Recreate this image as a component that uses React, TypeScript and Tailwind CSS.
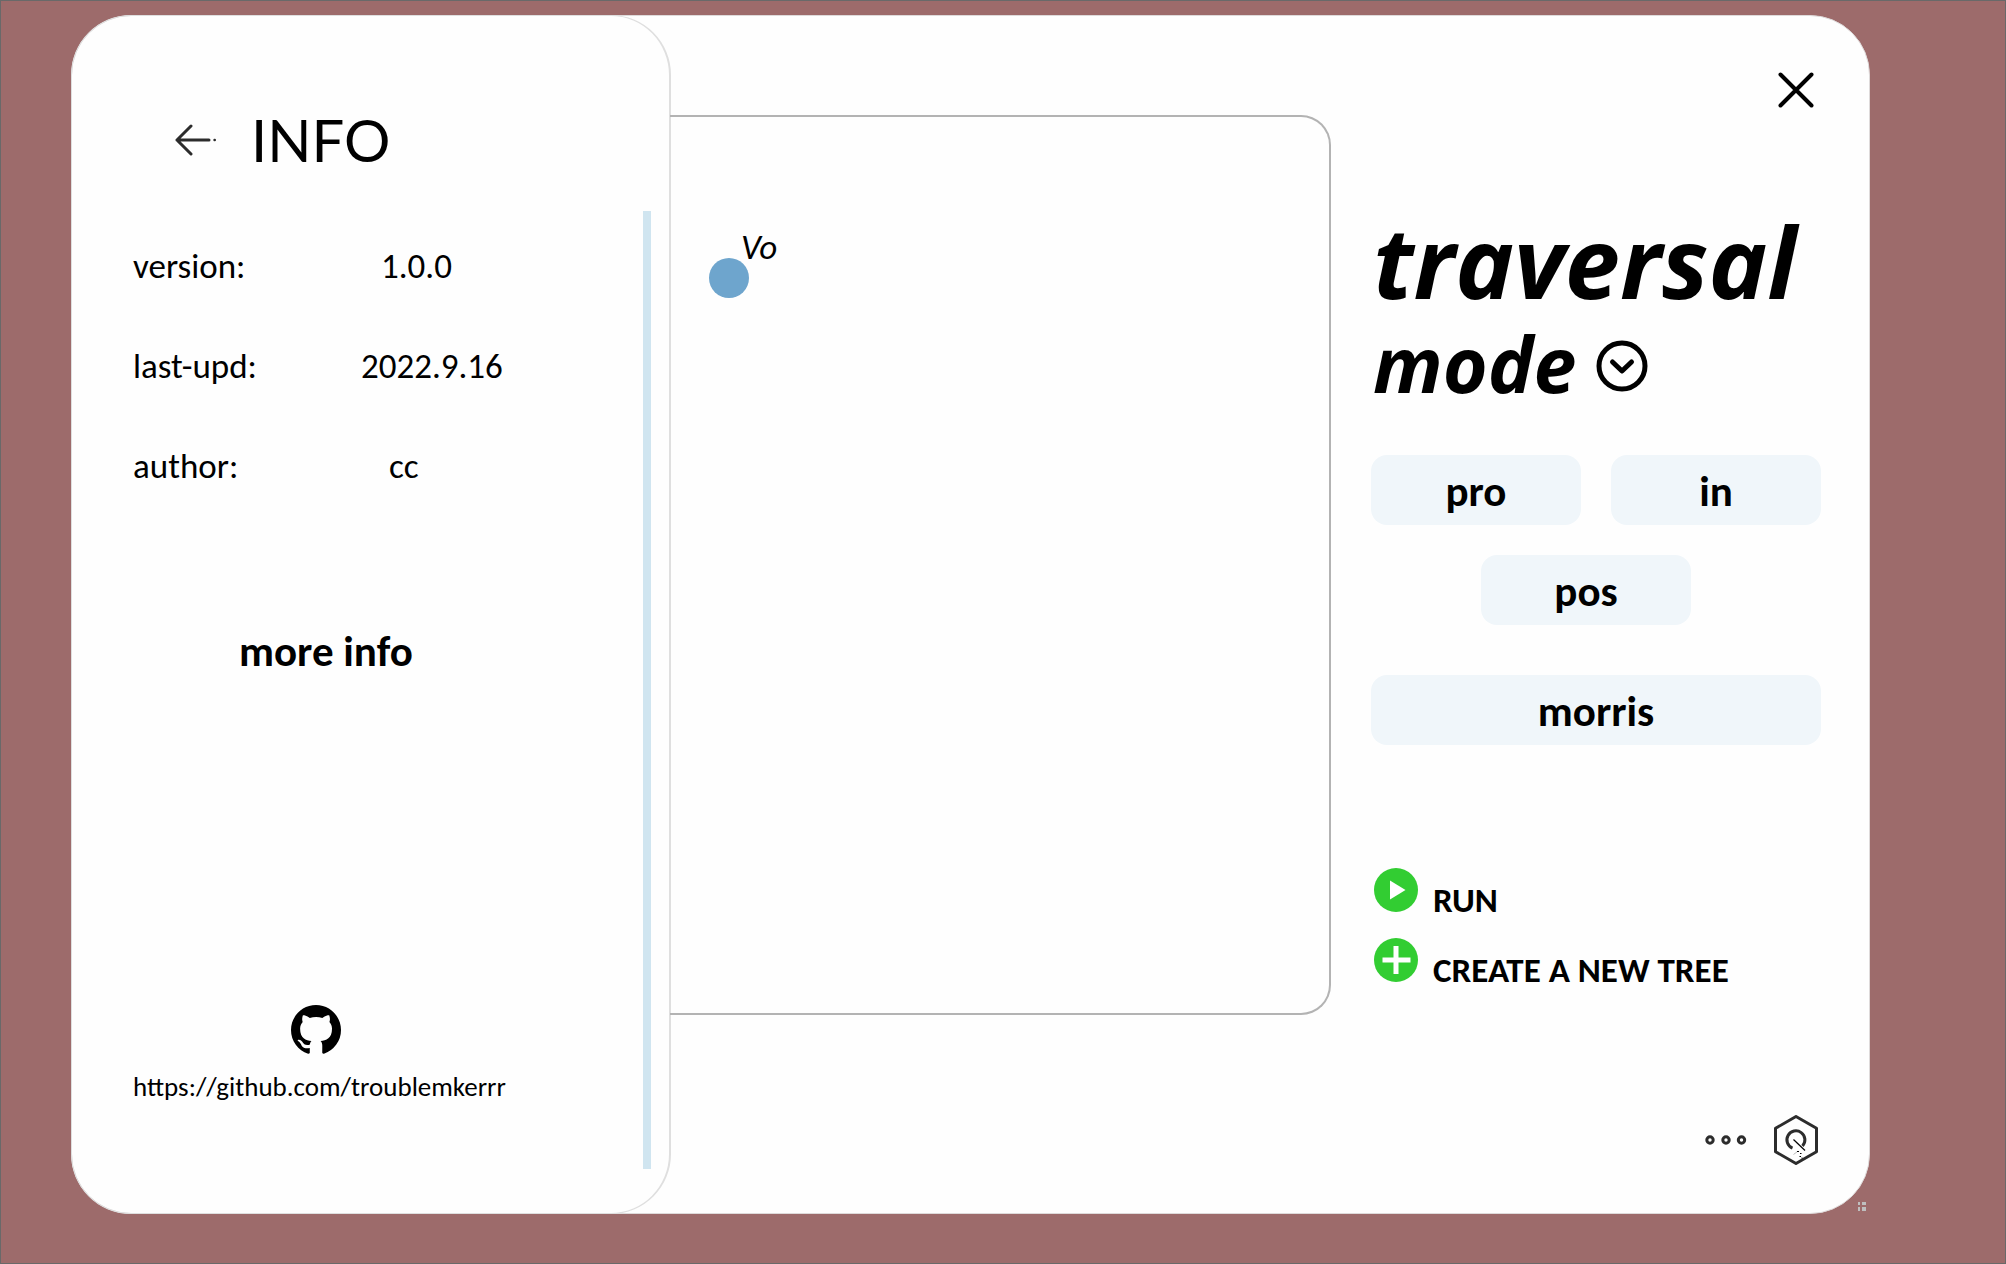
import React from "react";

const details = [
  { label: "version:", value: "1.0.0", indent: "pl-5" },
  { label: "last-upd:", value: "2022.9.16", indent: "pl-0" },
  { label: "author:", value: "cc", indent: "pl-7" },
];

function ArrowLeftIcon() {
  return (
    <svg width="42" height="32" viewBox="0 0 42 32" fill="none" stroke="#2c2c2c" strokeWidth="3" strokeLinecap="round" strokeLinejoin="round">
      <path d="M16 2 2 16l14 14M2 16h32" />
      <path d="M39.500 16h.3" strokeWidth="2.400" />
    </svg>
  );
}

function GithubIcon() {
  return (
    <svg width="50" height="50" viewBox="0 0 16 16" fill="#000">
      <path d="M8 0C3.58 0 0 3.58 0 8c0 3.54 2.29 6.53 5.47 7.59.4.07.55-.17.55-.38 0-.19-.01-.82-.01-1.49-2.01.37-2.53-.49-2.69-.94-.09-.23-.48-.94-.82-1.13-.28-.15-.68-.52-.01-.53.63-.01 1.08.58 1.23.82.72 1.21 1.87.87 2.33.66.07-.52.28-.87.51-1.07-1.78-.2-3.64-.89-3.64-3.95 0-.87.31-1.59.82-2.15-.08-.2-.36-1.02.08-2.12 0 0 .67-.21 2.2.82.64-.18 1.32-.27 2-.27s1.36.09 2 .27c1.53-1.04 2.2-.82 2.2-.82.44 1.1.16 1.92.08 2.12.51.56.82 1.27.82 2.15 0 3.07-1.87 3.75-3.65 3.95.29.25.54.73.54 1.48 0 1.07-.01 1.93-.01 2.2 0 .21.15.46.55.38A8.01 8.01 0 0 0 16 8c0-4.42-3.58-8-8-8z" />
    </svg>
  );
}

function CloseIcon() {
  return (
    <svg width="36" height="36" viewBox="0 0 36 36" fill="none" stroke="#000" strokeWidth="4" strokeLinecap="round">
      <path d="m2.500 2.500 31 31M33.500 2.500l-31 31" />
    </svg>
  );
}

function ChevronCircleIcon() {
  return (
    <svg width="52" height="52" viewBox="0 0 52 52" fill="none" stroke="#000" strokeLinecap="round" strokeLinejoin="round">
      <circle cx="26" cy="26" r="23" strokeWidth="5" />
      <path d="m16.500 22 9.500 9 9.500-9" strokeWidth="5" />
    </svg>
  );
}

function PlayIcon() {
  return (
    <svg width="44" height="44" viewBox="0 0 44 44">
      <circle cx="22" cy="22" r="22" fill="#32cd32" />
      <path d="M16 12.500v19L31.500 22z" fill="#fff" />
    </svg>
  );
}

function PlusIcon() {
  return (
    <svg width="44" height="44" viewBox="0 0 44 44">
      <circle cx="22" cy="22" r="22" fill="#32cd32" />
      <path d="M22 8v28M8.500 22h28" stroke="#fff" strokeWidth="5" />
    </svg>
  );
}

function DotsIcon() {
  return (
    <svg width="42" height="10" viewBox="0 0 42 10" fill="none" stroke="#2c2c2c" strokeWidth="3">
      <circle cx="5" cy="5" r="3.200" />
      <circle cx="21" cy="5" r="3.200" />
      <circle cx="36.500" cy="5" r="3.200" />
    </svg>
  );
}

function HexagonIcon() {
  return (
    <svg width="44" height="50" viewBox="0 0 44 50" fill="none" stroke="#2c2c2c" strokeWidth="3" strokeLinejoin="round">
      <path d="M22 1.500 42.500 13.300v23.400L22 48.500 1.500 36.700V13.300z" />
      <path d="M18.500 33.200A9 9 0 1 1 28.500 31" />
      <path d="m19.500 24.500 11.500 11" stroke="#000" strokeWidth="1.200" />
      <path d="m19.500 39.500 4-3" stroke="#bbb" strokeWidth="1" />
      <path d="M23 36.500h2M26 38.500h1.500M25.500 41.500h1.500M27.500 43h1" stroke="#000" strokeWidth="1.200" />
    </svg>
  );
}

function ModeButton({ children, className }: { children: React.ReactNode; className: string }) {
  return (
    <button type="button" className={`h-[70px] rounded-2xl bg-[#f0f6fa] pt-0.5 text-[43px] font-bold leading-none ${className}`}>
      {children}
    </button>
  );
}

export default function App() {
  return (
    <div className="flex min-h-screen border border-[#696969] bg-[#9d6b6b] pt-[14px] pr-[135px] pb-[49px] pl-[70px] font-['Carlito','Lato',sans-serif] text-black">
      <main className="relative flex flex-1 rounded-[60px] border border-[#dedada] bg-[#fefefe]">
        <aside className="-m-px flex w-[600px] shrink-0 rounded-[60px] border border-r-2 border-[#dfdfdf] pt-[94px] pb-11">
          <div className="flex flex-1 flex-col pl-[61px]">
            <header className="flex items-center gap-[34px] pl-[42px]">
              <button type="button" aria-label="Back">
                <ArrowLeftIcon />
              </button>
              <h1 className="font-['Lato',sans-serif] text-[58px] leading-[60px] font-normal">INFO</h1>
            </header>
            <dl className="mt-[46px] text-[35px]">
              {details.map(({ label, value, indent }) => (
                <div key={label} className="flex h-[100px] items-center">
                  <dt className="w-[228px]">{label}</dt>
                  <dd className={indent}>{value}</dd>
                </div>
              ))}
            </dl>
            <button type="button" className="mt-[106px] ml-[106px] self-start text-[43px] leading-[60px] font-bold">
              more info
            </button>
            <a href="https://github.com/troublemkerrr" className="mt-auto mb-[62px] flex flex-col items-start gap-3 text-[27px] leading-[40px]">
              <span className="ml-[158px]">
                <GithubIcon />
              </span>
              https://github.com/troublemkerrr
            </a>
          </div>
          <div className="mt-[101px] mr-[18px] w-2 bg-[#d0e5f0]" />
        </aside>

        <section aria-label="Tree canvas" className="relative mt-[99px] mb-[198px] flex-1 rounded-r-[30px] border-2 border-l-0 border-[#b3b3b3]">
          <div className="absolute top-[141px] left-[39px] size-10 rounded-full bg-[#6ea5cd]" />
          <span className="absolute top-[110px] left-[71px] text-[35px] leading-[40px] italic">Vo</span>
        </section>

        <section className="flex w-[538px] shrink-0 flex-col pt-14 pr-12 pb-12 pl-10">
          <button type="button" aria-label="Close" className="mr-[7px] self-end">
            <CloseIcon />
          </button>
          <h2 className="mt-[94px] pl-0.5 font-['Open_Sans',sans-serif] font-bold italic">
            <span className="block text-[99px] leading-[118px]">traversal</span>
            <span className="flex items-center gap-5 text-[77px] leading-[88px]">
              mode
              <button type="button" aria-label="Choose mode" className="pt-1">
                <ChevronCircleIcon />
              </button>
            </span>
          </h2>
          <div className="mt-[47px] flex gap-[30px]">
            <ModeButton className="flex-1">pro</ModeButton>
            <ModeButton className="flex-1">in</ModeButton>
          </div>
          <ModeButton className="mt-[30px] mr-5 w-[210px] self-center">pos</ModeButton>
          <ModeButton className="mt-[50px] w-full">morris</ModeButton>
          <div className="mt-[123px] ml-[3px] flex flex-col items-start gap-[26px] text-[35px] leading-9 font-bold">
            <button type="button" className="flex h-11 gap-[15px]">
              <PlayIcon />
              <span className="pt-3.5">RUN</span>
            </button>
            <button type="button" className="flex h-11 gap-[15px]">
              <PlusIcon />
              <span className="pt-3.5">CREATE A NEW TREE</span>
            </button>
          </div>
          <div className="mt-auto mr-[3px] flex items-center gap-[27px] self-end">
            <button type="button" aria-label="More options">
              <DotsIcon />
            </button>
            <button type="button" aria-label="Settings">
              <HexagonIcon />
            </button>
          </div>
        </section>

        <svg className="absolute right-[3px] bottom-[2px]" width="8" height="9" viewBox="0 0 8 9" fill="#bfbfbf">
          <path d="M0 0h2v3H0zM4 0h4v3H4zM0 5h2v4H0zM4 5h4v4H4z" />
        </svg>
      </main>
    </div>
  );
}
